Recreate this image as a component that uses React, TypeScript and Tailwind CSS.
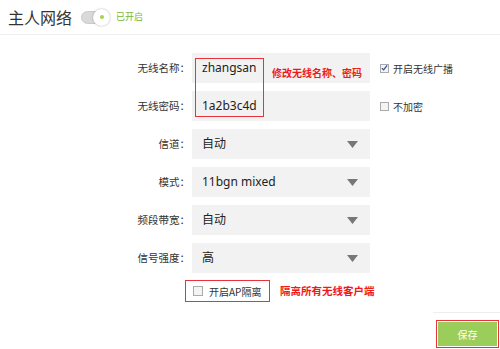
const cjk = "font-['Microsoft_YaHei','Noto_Sans_CJK_SC',sans-serif]";

const Arrow = () => (
  <svg width="11" height="7" viewBox="0 0 11 7" className="absolute right-[12px] top-[12px]">
    <path d="M0 0h11L5.5 7z" fill="#777" />
  </svg>
);

const Row = ({
  label,
  value,
  select,
  side,
}: {
  label: string;
  value: string;
  select?: boolean;
  side?: React.ReactNode;
}) => (
  <div className="flex items-center h-[30px]">
    <div className={`w-[192px] pr-[2px] text-right text-[10.5px] text-[#333] ${cjk}`}>{label}</div>
    <div className="relative w-[178px] h-[30px] bg-[#f2f2f2] flex items-center pl-[10px] text-[12px] text-[#222] font-['Noto_Sans','Noto_Sans_CJK_SC',sans-serif]">
      {value}
      {select && <Arrow />}
    </div>
    {side}
  </div>
);

const Check = ({ checked, label }: { checked?: boolean; label: string }) => (
  <div className={`flex items-center ml-[10px] text-[10px] text-[#333] ${cjk}`}>
    <span className="w-[9px] h-[9px] border border-[#aaa] bg-[#f4f4f4] flex items-center justify-center mr-[4px]">
      {checked && (
        <svg width="8" height="8" viewBox="0 0 8 8">
          <path d="M1 4.2l2 2L7 1" stroke="#2c4f9e" strokeWidth="1.4" fill="none" />
        </svg>
      )}
    </span>
    {label}
  </div>
);

export default function App() {
  return (
    <div className={`relative w-[500px] h-[349px] bg-white overflow-hidden ${cjk}`}>
      <div className="h-[35px] border-b border-[#eee] flex items-center pl-[8px]">
        <span className="text-[16px] text-[#333]">主人网络</span>
        <div className="relative ml-[9px] w-[28px] h-[13px] rounded-full bg-[#d9d9d9] border border-[#ccc]">
          <div className="absolute right-[-2px] top-[-3px] w-[17px] h-[17px] rounded-full bg-white shadow-[0_0_2px_rgba(0,0,0,0.35)] flex items-center justify-center">
            <span className="w-[4px] h-[4px] rounded-full bg-[#a6d44a]" />
          </div>
        </div>
        <span className="ml-[7px] text-[9px] text-[#7ab536]">已开启</span>
      </div>

      <div className="flex flex-col gap-[8px] pt-[18px]">
        <Row label="无线名称：" value="zhangsan" side={<Check checked label="开启无线广播" />} />
        <Row label="无线密码：" value="1a2b3c4d" side={<Check label="不加密" />} />
        <Row label="信道：" value="自动" select />
        <Row label="模式：" value="11bgn mixed" select />
        <Row label="频段带宽：" value="自动" select />
        <Row label="信号强度：" value="高" select />
      </div>

      <div className="flex items-center mt-[7px] ml-[185px]">
        <div className="w-[85px] h-[22px] border border-[#e8323c] flex items-center pl-[7px] text-[10px] text-[#333]">
          <span className="w-[10px] h-[10px] border border-[#aaa] bg-[#f4f4f4] mr-[6px]" />
          开启AP隔离
        </div>
        <span className="ml-[10px] text-[10.5px] text-[#f01818] font-semibold">隔离所有无线客户端</span>
      </div>

      <div className="absolute left-[195px] top-[58px] w-[69px] h-[59px] border border-[#e8323c]" />
      <span className="absolute left-[272px] top-[65px] text-[10px] text-[#f01818] font-semibold">修改无线名称、密码</span>

      <div className="absolute left-[433px] right-0 top-[312px] border-t border-[#eee]" />
      <div className="absolute left-[436px] top-[320px] w-[63px] h-[28px] border border-[#e8323c] p-[1px]">
        <div className="w-full h-full bg-[#9acd5a] flex items-center justify-center text-[10px] text-white">保存</div>
      </div>
    </div>
  );
}
